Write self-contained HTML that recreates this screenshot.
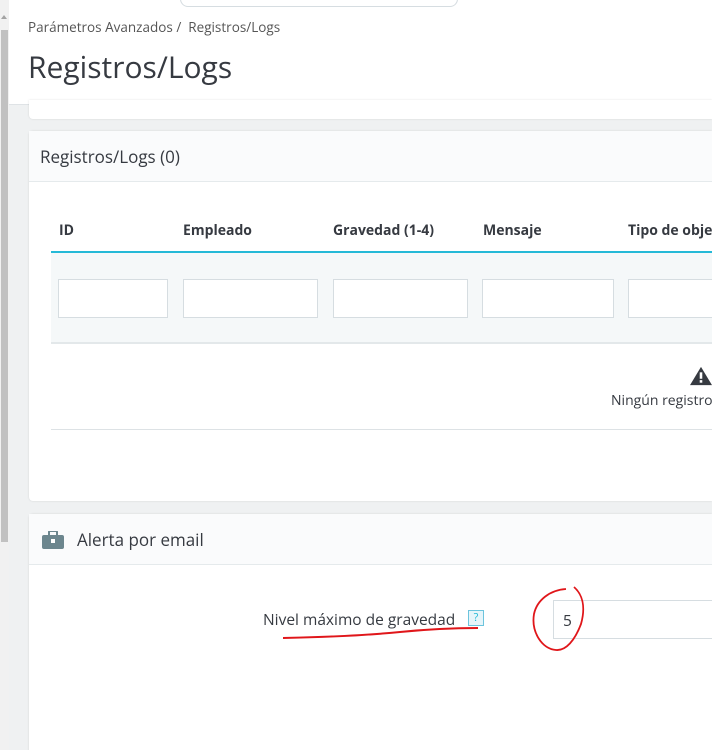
<!DOCTYPE html>
<html><head><meta charset="utf-8"><style>
*{box-sizing:border-box;margin:0;padding:0}
html,body{width:712px;height:750px;overflow:hidden}
body{background:#eff1f2;font-family:"Open Sans","Liberation Sans",sans-serif;color:#363a41;position:relative}
.abs{position:absolute}
.sb{left:0;top:0;width:9px;height:750px;background:#f1f1f1}
.thumb{left:1px;top:30px;width:7px;height:512px;background:#c1c1c1}
.hdr{left:9px;top:0;width:703px;height:105px;background:#fff;border-bottom:1px solid #dfe3e6}
.card{left:29px;width:683px;background:#fff;border-radius:4px 0 0 4px;box-shadow:0 0 2px rgba(0,0,0,.12)}
.ch{background:#fafbfc;border-bottom:1px solid #e5eaec;height:51px;font-size:17px;line-height:51px;padding-left:11px}
.th{top:221px;font-size:14px;font-weight:bold}
.inp{top:279px;height:39px;background:#fff;border:1px solid #d6dde1}
</style></head><body>
<div class="abs sb"></div><div class="abs thumb"></div>
<div class="abs" style="left:1px;top:15px;width:0;height:0;border-left:3px solid transparent;border-right:3px solid transparent;border-bottom:4px solid #a3a3a3"></div>
<div class="abs hdr"></div>
<div class="abs" style="left:180px;top:-10px;width:278px;height:17px;border:1px solid #d6dde1;border-radius:8px;background:#fff"></div>
<div class="abs" style="left:28px;top:18px;font-size:13.5px;color:#555">Parámetros Avanzados /&nbsp; Registros/Logs</div>
<div class="abs" style="left:28px;top:46px;font-size:30px;color:#363a41">Registros/Logs</div>
<div class="abs card" style="top:100px;height:19px;border-radius:0 0 0 4px"></div>
<div class="abs card" style="top:131px;height:370px">
<div class="ch">Registros/Logs (0)</div></div>
<div class="abs th" style="left:59px">ID</div>
<div class="abs th" style="left:183px">Empleado</div>
<div class="abs th" style="left:333px">Gravedad (1-4)</div>
<div class="abs th" style="left:483px">Mensaje</div>
<div class="abs th" style="left:628px;white-space:nowrap">Tipo de obje</div>
<div class="abs" style="left:51px;top:251px;width:661px;height:2px;background:#25b9d7"></div>
<div class="abs" style="left:51px;top:253px;width:661px;height:91px;background:#f5f8f9;border-bottom:2px solid #e3e8ea"></div>
<div class="abs inp" style="left:58px;width:110px"></div>
<div class="abs inp" style="left:183px;width:135px"></div>
<div class="abs inp" style="left:333px;width:135px"></div>
<div class="abs inp" style="left:482px;width:132px"></div>
<div class="abs inp" style="left:628px;width:84px;border-right:none"></div>
<svg class="abs" style="left:690px;top:366px" width="22" height="20" viewBox="0 0 24 20"><path d="M12 0 L24 20 H0Z" fill="#363a41"/><rect x="10.6" y="6" width="2.8" height="7" fill="#fff"/><rect x="10.6" y="14.5" width="2.8" height="2.8" fill="#fff"/></svg>
<div class="abs" style="left:611px;top:391px;font-size:14px;white-space:nowrap">Ningún registro</div>
<div class="abs" style="left:51px;top:429px;width:661px;height:1px;background:#dde2e5"></div>
<div class="abs card" style="top:514px;height:240px">
<div class="ch" style="padding-left:48px">Alerta por email</div></div>
<svg class="abs" style="left:42px;top:531px" width="22" height="18" viewBox="0 0 22 18"><rect x="7" y="0" width="8" height="5" rx="1" fill="none" stroke="#6c868e" stroke-width="2"/><rect x="0" y="4" width="22" height="14" rx="2" fill="#6c868e"/><rect x="9" y="8" width="4" height="4" fill="#fff"/></svg>
<div class="abs" style="left:263px;top:608px;font-size:15.5px">Nivel máximo de gravedad</div>
<div class="abs" style="left:468px;top:610px;width:16px;height:16px;border:1.5px solid #6cc4dd;background:#e6f5fa;color:#25b9d7;font-size:11px;text-align:center;line-height:13px">?</div>
<div class="abs" style="left:553px;top:600px;width:159px;height:39px;border:1px solid #d6dde1;border-right:none;background:#fff;font-size:15.5px;padding:8px 0 0 9px">5</div>
<svg class="abs" style="left:0;top:0" width="712" height="750"><path d="M283 638 C330 637 370 635 400 632 C430 629 455 628 478 628" fill="none" stroke="#e0161a" stroke-width="2"/><path d="M574 587 C582 594 586 606 581 624 C575 640 566 651 556 650 C542 649 531 632 534 614 C537 600 550 590 566 589" fill="none" stroke="#e0161a" stroke-width="1.8"/></svg>
</body></html>
